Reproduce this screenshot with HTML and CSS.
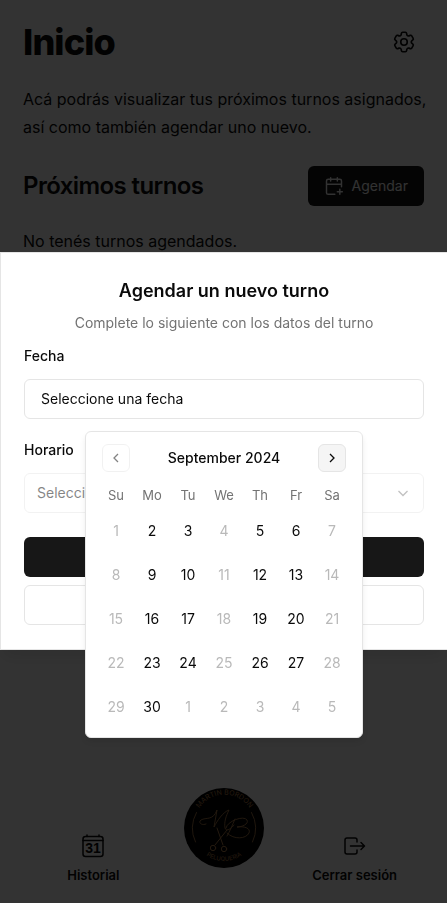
FILE: index.html
```html
<!DOCTYPE html>
<html lang="es">
<head>
<meta charset="utf-8">
<meta name="viewport" content="width=device-width, initial-scale=1">
<title>Inicio</title>
<link rel="stylesheet" href="styles.css">
</head>
<body>
<div class="page">
  <main class="content">
    <header class="topbar">
      <h1 class="page-title">Inicio</h1>
      <button class="icon-button" type="button" aria-label="Configuración">
        <svg class="gear" viewBox="0 0 24 24" fill="none" stroke="currentColor" stroke-width="1.5" stroke-linecap="round" stroke-linejoin="round"><path d="M9.594 3.94c.09-.542.56-.94 1.11-.94h2.593c.55 0 1.02.398 1.11.94l.213 1.281c.063.374.313.686.645.87.074.04.147.083.22.127.325.196.72.257 1.075.124l1.217-.456a1.125 1.125 0 0 1 1.37.49l1.296 2.247a1.125 1.125 0 0 1-.26 1.431l-1.003.827c-.293.241-.438.613-.43.992a7.723 7.723 0 0 1 0 .255c-.008.378.137.75.43.991l1.004.827c.424.35.534.955.26 1.43l-1.298 2.247a1.125 1.125 0 0 1-1.369.491l-1.217-.456c-.355-.133-.75-.072-1.076.124a6.47 6.47 0 0 1-.22.128c-.331.183-.581.495-.644.869l-.213 1.281c-.09.543-.56.94-1.11.94h-2.594c-.55 0-1.019-.398-1.11-.94l-.213-1.281c-.062-.374-.312-.686-.644-.87a6.52 6.52 0 0 1-.22-.127c-.325-.196-.72-.257-1.076-.124l-1.217.456a1.125 1.125 0 0 1-1.369-.49l-1.297-2.247a1.125 1.125 0 0 1 .26-1.431l1.004-.827c.292-.24.437-.613.43-.991a6.932 6.932 0 0 1 0-.255c.007-.38-.138-.751-.43-.992l-1.004-.827a1.125 1.125 0 0 1-.26-1.43l1.297-2.247a1.125 1.125 0 0 1 1.37-.491l1.216.456c.356.133.751.072 1.076-.124.072-.044.146-.086.22-.128.332-.183.582-.495.644-.869l.214-1.28Z"/><circle cx="12" cy="12" r="3"/></svg>
      </button>
    </header>
    <p class="lead">Acá podrás visualizar tus próximos turnos asignados, así como también agendar uno nuevo.</p>
    <div class="section-head">
      <h2 class="section-title">Próximos turnos</h2>
      <button class="button primary" type="button">
        <svg width="20" height="20" viewBox="0 0 24 24" fill="none" stroke="currentColor" stroke-width="1.75" stroke-linecap="round" stroke-linejoin="round"><path d="M8 2v4M16 2v4M21 13V6a2 2 0 0 0-2-2H5a2 2 0 0 0-2 2v14a2 2 0 0 0 2 2h8M3 10h18M16 19h6M19 16v6"/></svg>
        Agendar
      </button>
    </div>
    <p class="empty">No tenés turnos agendados.</p>
  </main>
  <nav class="bottom-nav">
    <a class="nav-item" href="#historial">
      <svg width="24" height="24" viewBox="0 0 24 24" fill="none" stroke="currentColor" stroke-width="1.5" stroke-linecap="round"><rect x="2" y="2.500" width="20" height="20" rx="2.500"/><path d="M2 6.500h20M6 1v1.500M18 1v1.500"/><text class="cal-day" x="12" y="19" text-anchor="middle">31</text></svg>
      <span>Historial</span>
    </a>
    <a class="nav-logo" href="#inicio" aria-label="Martin Bordon Peluqueria">
      <svg width="80" height="80" viewBox="0 0 80 80" fill="none" stroke="#b07f4c" stroke-linecap="round">
        <circle cx="40" cy="40" r="40" fill="#000" stroke="none"/>
        <path id="arc-top" d="M11 36a29.500 29.500 0 0 1 59 0"/>
        <path id="arc-bottom" d="M13 58a32 32 0 0 0 54 0"/>
        <path d="M12.500 24.500Q4.500 39 11.500 54M67.500 24.500Q75.500 39 68.500 54" stroke-width=".9"/>
        <path d="M22 36c-5 2-8-2-5-4 5-3 12 1 16-10l-3 17c3-6 9-15 15-17-3 6-5 12-4 18 1 4 6 1 9-3M51 31c-3 7-5 12-8 17M42 40c1-7 18-13 21-8 2 4-5 7-10 7 7-1 14 1 12 6-3 6-15 7-22 0" stroke-width=".9"/>
        <path d="M33 40l6 17M43 42L31 57"/>
        <circle cx="29" cy="60" r="2.700"/><circle cx="40" cy="61" r="2.700"/>
        <text class="logo-text top"><textPath href="#arc-top" startOffset="50%" text-anchor="middle">MARTIN BORDON</textPath></text>
        <text class="logo-text"><textPath href="#arc-bottom" startOffset="50%" text-anchor="middle">PELUQUERIA</textPath></text>
      </svg>
    </a>
    <a class="nav-item" href="#salir">
      <svg width="24" height="24" viewBox="0 0 24 24" fill="none" stroke="currentColor" stroke-width="1.5" stroke-linecap="round" stroke-linejoin="round"><path d="M14 8V6a2 2 0 0 0-2-2H4a2 2 0 0 0-2 2v12a2 2 0 0 0 2 2h8a2 2 0 0 0 2-2v-2M7.500 12H21M18 8.500l3.500 3.500-3.500 3.500"/></svg>
      <span>Cerrar sesión</span>
    </a>
  </nav>
</div>

<div class="overlay">
  <section class="dialog" role="dialog" aria-labelledby="dialog-title">
    <h2 class="dialog-title" id="dialog-title">Agendar un nuevo turno</h2>
    <p class="dialog-text">Complete lo siguiente con los datos del turno</p>
    <form class="form">
      <div class="field">
        <label for="fecha">Fecha</label>
        <button class="date-trigger" id="fecha" type="button">Seleccione una fecha</button>
        <div class="popover">
          <div class="month-bar">
            <button class="month-nav dimmed" type="button" aria-label="Mes anterior"><svg width="16" height="16" viewBox="0 0 16 16" fill="none" stroke="currentColor" stroke-width="1.300"><path d="M10 4L6 8l4 4"/></svg></button>
            <span class="month">September 2024</span>
            <button class="month-nav active" type="button" aria-label="Mes siguiente"><svg width="16" height="16" viewBox="0 0 16 16" fill="none" stroke="currentColor" stroke-width="1.300"><path d="M6 4l4 4-4 4"/></svg></button>
          </div>
          <table class="calendar">
            <thead><tr><th>Su</th><th>Mo</th><th>Tu</th><th>We</th><th>Th</th><th>Fr</th><th>Sa</th></tr></thead>
            <tbody>
              <tr><td><button type="button" disabled>1</button></td><td><button type="button">2</button></td><td><button type="button">3</button></td><td><button type="button" disabled>4</button></td><td><button type="button">5</button></td><td><button type="button">6</button></td><td><button type="button" disabled>7</button></td></tr>
              <tr><td><button type="button" disabled>8</button></td><td><button type="button">9</button></td><td><button type="button">10</button></td><td><button type="button" disabled>11</button></td><td><button type="button">12</button></td><td><button type="button">13</button></td><td><button type="button" disabled>14</button></td></tr>
              <tr><td><button type="button" disabled>15</button></td><td><button type="button">16</button></td><td><button type="button">17</button></td><td><button type="button" disabled>18</button></td><td><button type="button">19</button></td><td><button type="button">20</button></td><td><button type="button" disabled>21</button></td></tr>
              <tr><td><button type="button" disabled>22</button></td><td><button type="button">23</button></td><td><button type="button">24</button></td><td><button type="button" disabled>25</button></td><td><button type="button">26</button></td><td><button type="button">27</button></td><td><button type="button" disabled>28</button></td></tr>
              <tr><td><button type="button" disabled>29</button></td><td><button type="button">30</button></td><td><button type="button" disabled>1</button></td><td><button type="button" disabled>2</button></td><td><button type="button" disabled>3</button></td><td><button type="button" disabled>4</button></td><td><button type="button" disabled>5</button></td></tr>
            </tbody>
          </table>
        </div>
      </div>
      <div class="field">
        <label for="horario">Horario</label>
        <div class="select-wrap">
          <select id="horario" disabled><option>Selecci</option></select>
          <svg class="chevron" width="16" height="16" viewBox="0 0 16 16" fill="none" stroke="currentColor" stroke-width="1.300"><path d="M3.500 6L8 10.500 12.500 6"/></svg>
        </div>
      </div>
      <div class="actions">
        <button class="button primary" type="submit" aria-label="Agendar"></button>
        <button class="button outline" type="button" aria-label="Cancelar"></button>
      </div>
    </form>
  </section>
</div>
</body>
</html>
```
FILE: styles.css
```css
* { box-sizing: border-box; }

body {
  margin: 0;
  background: #fff;
  color: #0a0a0a;
  font: 16px/28px Inter, "Liberation Sans", sans-serif;
}

h1, h2, p { margin: 0; }
button, select { font: inherit; color: inherit; }
a { color: inherit; text-decoration: none; }
svg { flex: none; }

.page {
  display: flex;
  flex-direction: column;
  min-height: 100vh;
}

.content { padding: 22px 23px 0; }

.topbar, .section-head {
  display: flex;
  align-items: center;
  justify-content: space-between;
}

.page-title {
  font-size: 36px;
  line-height: 40px;
  font-weight: 800;
  letter-spacing: -0.025em;
}

.icon-button {
  display: grid;
  place-items: center;
  width: 40px;
  height: 40px;
  padding: 0;
  border: 0;
  background: none;
}

.gear { width: 26px; height: 26px; }
.lead { margin: 23px -12px 25px 0; }

.section-title {
  font-size: 24px;
  line-height: 32px;
  font-weight: 600;
  letter-spacing: -0.025em;
}

.empty { margin-top: 21px; }

.button {
  display: flex;
  align-items: center;
  justify-content: center;
  gap: 8px;
  height: 40px;
  padding: 0 16px;
  border: 0;
  border-radius: 6px;
  font-size: 14px;
  line-height: 20px;
  font-weight: 400;
}

.primary { background: #171717; color: #fafafa; }
.outline { border: 1px solid #e5e5e5; background: #fff; }

.bottom-nav {
  display: grid;
  grid-template-columns: repeat(3, 1fr);
  align-items: end;
  margin-top: auto;
  padding: 0 27px 18px 28px;
}

.nav-item {
  display: flex;
  flex-direction: column;
  align-items: center;
  gap: 7px;
  font-size: 13px;
  line-height: 20px;
  font-weight: 600;
  white-space: nowrap;
}

.cal-day {
  fill: currentColor;
  stroke: none;
  font: 600 14px "Liberation Sans", sans-serif;
}

.nav-logo {
  display: flex;
  justify-content: center;
  padding-bottom: 17px;
}

#arc-top, #arc-bottom { stroke: none; }
.logo-text { fill: #b07f4c; stroke: none; font-size: 6px; }
.logo-text.top { font-size: 7px; }

.overlay {
  position: fixed;
  inset: 0;
  display: grid;
  align-items: center;
  padding-bottom: 1px;
  background: rgba(0, 0, 0, 0.8);
}

.dialog {
  padding: 24px 23px;
  border: 1px solid #e5e5e5;
  border-right: 0;
  background: #fff;
  box-shadow: 0 10px 15px -3px rgba(0, 0, 0, 0.1);
}

.dialog-title {
  font-size: 18px;
  line-height: 28px;
  font-weight: 600;
  text-align: center;
}

.dialog-text {
  margin: 8px 0 16px;
  color: #737373;
  font-size: 14px;
  line-height: 20px;
  text-align: center;
}

.form { display: grid; gap: 24px; }

.field {
  position: relative;
  display: grid;
  gap: 16px;
  font-size: 14px;
  line-height: 14px;
}

.field label { font-weight: 500; }

.date-trigger, select {
  width: 100%;
  height: 40px;
  border: 1px solid #e5e5e5;
  border-radius: 6px;
  background: #fff;
  text-align: left;
}

.date-trigger { padding: 0 16px; }

.select-wrap {
  display: grid;
  align-items: center;
  opacity: 0.5;
}

.select-wrap > * { grid-area: 1 / 1; }

select {
  appearance: none;
  padding: 0 12px;
  opacity: 1;
}

.chevron {
  justify-self: end;
  margin-right: 13px;
  opacity: 0.5;
}

.actions { display: grid; gap: 8px; }

.popover {
  position: absolute;
  z-index: 1;
  top: calc(100% + 12px);
  left: 50%;
  width: 278px;
  margin-left: -139px;
  padding: 12px;
  border: 1px solid #e5e5e5;
  border-radius: 6px;
  background: #fff;
  color: #0a0a0a;
  box-shadow: 0 4px 6px -1px rgba(0, 0, 0, 0.1);
}

.month-bar {
  display: flex;
  align-items: center;
  justify-content: space-between;
  padding: 0 4px;
}

.month { font-weight: 500; }

.month-nav {
  display: grid;
  place-items: center;
  width: 28px;
  height: 28px;
  padding: 0;
  border: 1px solid #e5e5e5;
  border-radius: 6px;
  background: #fff;
}

.dimmed { opacity: 0.5; }
.active { background: #f5f5f5; }

.calendar {
  width: 100%;
  margin-top: 12px;
  border-collapse: collapse;
  table-layout: fixed;
}

.calendar th {
  height: 21px;
  padding: 0;
  color: #737373;
  font-size: 13px;
  font-weight: 400;
}

.calendar td { padding: 8px 0 0; }

.calendar button {
  display: block;
  width: 100%;
  height: 36px;
  padding: 0;
  border: 0;
  background: none;
  text-align: center;
}

.calendar button:disabled { color: #b9b9b9; }
```
